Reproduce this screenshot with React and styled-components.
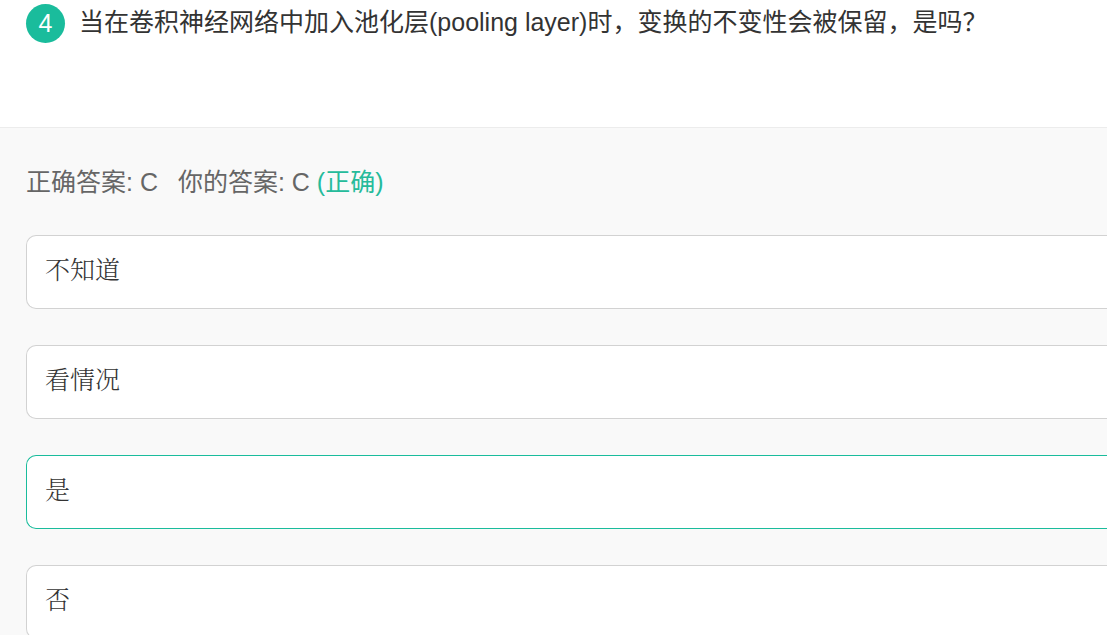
import React from "react";
import styled, { createGlobalStyle } from "styled-components";

const GlobalStyle = createGlobalStyle`
  * { box-sizing: border-box; }
  html {
    background: #f9f9f9;
    scrollbar-width: none;
  }
  body {
    margin: 0;
    font-family: "Liberation Sans", "Noto Sans CJK SC", sans-serif;
    color: #333;
  }
`;

const Question = styled.header`
  display: flex;
  align-items: flex-start;
  gap: 14px;
  min-height: 128px;
  padding: 4px 26px 0;
  background: #fff;
  border-bottom: 1px solid #ececec;
`;

const Badge = styled.span`
  flex: none;
  width: 39px;
  height: 39px;
  border-radius: 50%;
  background: #1abc9c;
  color: #fff;
  font-size: 25px;
  line-height: 39px;
  text-align: center;
`;

const Title = styled.h1`
  margin: 0;
  font-size: 25px;
  line-height: 36px;
  font-weight: 400;
`;

const Answers = styled.main`
  padding: 36px 0 0 26px;
`;

const Result = styled.p`
  display: flex;
  flex-wrap: wrap;
  column-gap: 20px;
  margin: 0 0 35px;
  font-size: 25px;
  line-height: 36px;
  color: #666;
`;

const Correct = styled.span`
  color: #25bb9b;
`;

const Options = styled.ul`
  display: flex;
  flex-direction: column;
  gap: 36px;
  margin: 0;
  padding: 0;
  list-style: none;
`;

const Option = styled.li`
  padding: 14px 18px 22px;
  border: 1px solid ${(p) => (p.$chosen ? "#1abc9c" : "#d2d2d2")};
  border-right: 0;
  border-radius: 10px 0 0 10px;
  background: #fff;
  font-family: "Noto Serif CJK SC", "Noto Sans CJK SC", serif;
  font-weight: 300;
  font-size: 25px;
  line-height: 36px;
`;

const options = [
  { text: "不知道" },
  { text: "看情况" },
  { text: "是", chosen: true },
  { text: "否" },
];

export default function App() {
  return (
    <>
      <GlobalStyle />
      <Question>
        <Badge>4</Badge>
        <Title>当在卷积神经网络中加入池化层(pooling layer)时，变换的不变性会被保留，是吗？</Title>
      </Question>
      <Answers>
        <Result>
          <span>正确答案: C</span>
          <span>你的答案: C <Correct>(正确)</Correct></span>
        </Result>
        <Options>
          {options.map((o) => (
            <Option key={o.text} $chosen={o.chosen}>{o.text}</Option>
          ))}
        </Options>
      </Answers>
    </>
  );
}
